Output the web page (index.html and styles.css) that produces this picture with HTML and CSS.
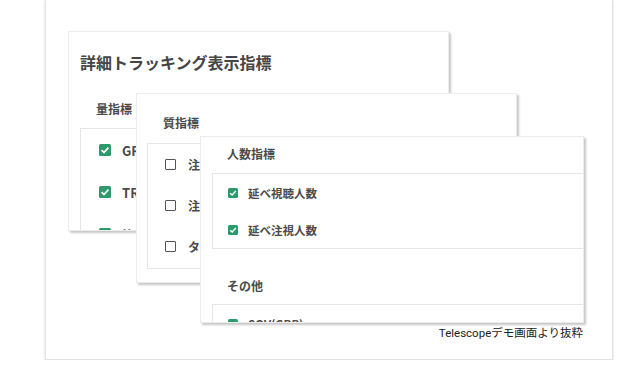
FILE: index.html
```html
<!DOCTYPE html>
<html lang="ja">
<head>
    <meta charset="UTF-8">
    <meta name="viewport" content="width=device-width, initial-scale=1.0">
    <title>Telescope 詳細トラッキング表示指標</title>
    <link rel="stylesheet" href="styles.css">
</head>
<body>
    <div class="frame">
        <div class="stage">
            <div class="card card-main">
                <h2>詳細トラッキング表示指標</h2>
                <h3>量指標</h3>
                <div class="box">
                    <label class="row"><span class="check on"><svg viewBox="0 0 12 12"><polyline points="2.6,6.2 5,8.5 9.4,3.6"/></svg></span>GRP</label>
                    <label class="row"><span class="check on"><svg viewBox="0 0 12 12"><polyline points="2.6,6.2 5,8.5 9.4,3.6"/></svg></span>TRP</label>
                    <label class="row"><span class="check on"><svg viewBox="0 0 12 12"><polyline points="2.6,6.2 5,8.5 9.4,3.6"/></svg></span>注視GRP</label>
                </div>
            </div>

            <div class="card card-quality">
                <h3>質指標</h3>
                <div class="box">
                    <label class="row"><span class="check"></span>注視率</label>
                    <label class="row"><span class="check"></span>注目度</label>
                    <label class="row"><span class="check"></span>ターゲット含有率</label>
                </div>
            </div>

            <div class="card card-people">
                <h3>人数指標</h3>
                <div class="box">
                    <label class="row"><span class="check on"><svg viewBox="0 0 12 12"><polyline points="2.6,6.2 5,8.5 9.4,3.6"/></svg></span>延べ視聴人数</label>
                    <label class="row"><span class="check on"><svg viewBox="0 0 12 12"><polyline points="2.6,6.2 5,8.5 9.4,3.6"/></svg></span>延べ注視人数</label>
                </div>
                <h3 class="other">その他</h3>
                <div class="box">
                    <label class="row"><span class="check on"><svg viewBox="0 0 12 12"><polyline points="2.6,6.2 5,8.5 9.4,3.6"/></svg></span>SOV(GRP)</label>
                </div>
            </div>
        </div>
        <p class="caption">Telescopeデモ画面より抜粋</p>
    </div>
</body>
</html>
```

FILE: styles.css
```css
body {
    margin: 0;
    background: #fff;
    font-family: "Noto Sans CJK JP", "Noto Sans", sans-serif;
    color: #444;
}
.frame {
    box-sizing: border-box;
    margin-left: 45px;
    width: 568px;
    height: 360px;
    border: 1px solid #e2e2e2;
    border-top: none;
    box-shadow: 0 1px 2px rgba(0, 0, 0, 0.18);
    display: flex;
    flex-direction: column;
}
.stage {
    position: relative;
    height: 325px;
    flex: none;
}
.card {
    position: absolute;
    box-sizing: border-box;
    background: #fff;
    border: 1px solid #ececec;
    box-shadow: 2px 2px 2px rgba(0, 0, 0, 0.22);
    overflow: hidden;
}
.card h2 {
    margin: 0;
    font-size: 16px;
    line-height: 20px;
    font-weight: 700;
    color: #454545;
}
.card h3 {
    margin: 0;
    font-size: 12px;
    line-height: 18px;
    font-weight: 700;
    color: #4a4a4a;
}
.box {
    border: 1px solid #e6e6e6;
    margin-right: -30px;
}
.row {
    display: flex;
    align-items: center;
    font-size: 12px;
    font-weight: 700;
    color: #4a4a4a;
    white-space: nowrap;
}
.check {
    box-sizing: border-box;
    flex: none;
    border: 1.5px solid #555;
    border-radius: 1px;
    background: #fff;
}
.check.on {
    border: none;
    background: #2c9b6c;
    border-radius: 1.5px;
}
.check svg {
    display: block;
    width: 100%;
    height: 100%;
    fill: none;
    stroke: #fff;
    stroke-width: 1.7;
}

/* 詳細トラッキング */
.card-main {
    left: 22px;
    top: 31px;
    width: 381px;
    height: 200px;
    padding: 20px 0 0 11px;
}
.card-main h3 {
    margin: 28px 0 10px 16px;
}
.card-main .row {
    height: 42px;
    padding-left: 18px;
    font-size: 13px;
}
.card-main .check {
    width: 12px;
    height: 12px;
    margin-right: 11px;
}

/* 質指標 */
.card-quality {
    left: 90px;
    top: 93px;
    width: 381px;
    height: 190px;
    padding: 20px 0 0 10px;
}
.card-quality h3 {
    margin: 0 0 11px 16px;
}
.card-quality .box {
    height: 124px;
}
.card-quality .row {
    height: 41px;
    padding-left: 17px;
}
.card-quality .check {
    width: 11px;
    height: 11px;
    margin-right: 12px;
}

/* 人数指標 */
.card-people {
    left: 154px;
    top: 136px;
    width: 384px;
    height: 187px;
    padding: 8px 0 0 11px;
}
.card-people h3 {
    margin: 0 0 10px 15px;
}
.card-people h3.other {
    margin-top: 28px;
    margin-bottom: 9px;
}
.card-people .row {
    height: 37px;
    padding-left: 15px;
    font-size: 11.5px;
}
.card-people .check {
    width: 10px;
    height: 10px;
    margin-right: 10px;
}

.caption {
    margin: 0;
    padding-right: 29px;
    text-align: right;
    font-family: Roboto, "Noto Sans CJK JP", sans-serif;
    font-size: 11.5px;
    line-height: 16px;
    color: #222;
}
```
